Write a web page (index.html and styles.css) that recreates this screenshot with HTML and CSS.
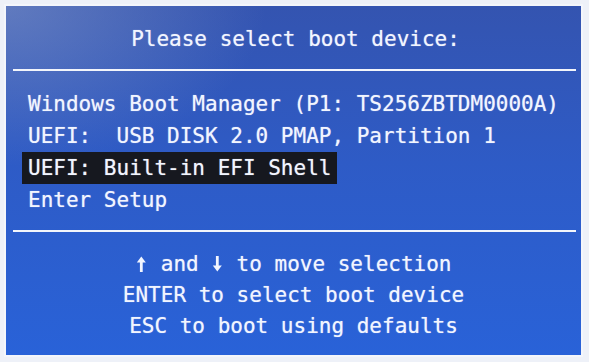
FILE: index.html
```html
<!DOCTYPE html>
<html>
<head>
<meta charset="utf-8">
<link rel="stylesheet" href="styles.css">
</head>
<body>
<div class="screen">
  <div class="title">Please select boot device:</div>
  <div class="rule"></div>
  <div class="menu">
    <div class="item">Windows Boot Manager (P1: TS256ZBTDM0000A)</div>
    <div class="item">UEFI:  USB DISK 2.0 PMAP, Partition 1</div>
    <div class="item"><span class="selected">UEFI: Built-in EFI Shell</span></div>
    <div class="item">Enter Setup</div>
  </div>
  <div class="rule"></div>
  <div class="help">
    <div class="hint"><svg class="arrow" viewBox="0 0 12 16" aria-label="↑"><polygon points="1.5,6.5 6,0.5 10.5,6.5"/><rect x="4.6" y="5" width="2.8" height="11"/></svg> and <svg class="arrow" viewBox="0 0 12 16" aria-label="↓"><polygon points="1.5,9.5 6,15.5 10.5,9.5"/><rect x="4.6" y="0" width="2.8" height="11"/></svg> to move selection</div>
    <div class="hint">ENTER to select boot device</div>
    <div class="hint">ESC to boot using defaults</div>
  </div>
</div>
</body>
</html>
```
FILE: styles.css
```css
html, body {
  margin: 0;
  padding: 0;
}
body {
  width: 589px;
  height: 362px;
  background: #eef1f8;
  overflow: hidden;
  font-family: "DejaVu Sans Mono", "Liberation Mono", monospace;
  font-size: 21px;
  color: #f2f5ff;
}
.screen {
  box-sizing: border-box;
  margin: 4px 0 0 4px;
  width: 579px;
  height: 353px;
  border: 2px solid #f4f6fb;
  background:
    radial-gradient(ellipse 260px 160px at 0% 0%, rgba(140, 160, 205, 0.5), rgba(140, 160, 205, 0) 100%),
    linear-gradient(180deg, #3454b0 0%, #2e5bc6 45%, #2962d8 100%);
  display: flex;
  flex-direction: column;
  text-shadow: 0 0 1px rgba(255, 255, 255, 0.6);
}
.title {
  height: 63px;
  line-height: 66px;
  text-align: center;
  padding-left: 4px;
}
.rule {
  flex: none;
  height: 2px;
  margin: 0 5px 0 7px;
  background: #f2f5fb;
}
.menu {
  padding: 17px 0 14px 16px;
  line-height: 32px;
}
.item {
  height: 32px;
  white-space: pre;
  padding: 0 6px;
}
.selected {
  display: inline-block;
  margin-left: -6px;
  padding: 0 6px;
  background: #16181f;
}
.help {
  padding-top: 17px;
  line-height: 31px;
  text-align: center;
}
.arrow {
  width: 12.64px;
  height: 16px;
  vertical-align: -1px;
  fill: #f2f5ff;
}
```
